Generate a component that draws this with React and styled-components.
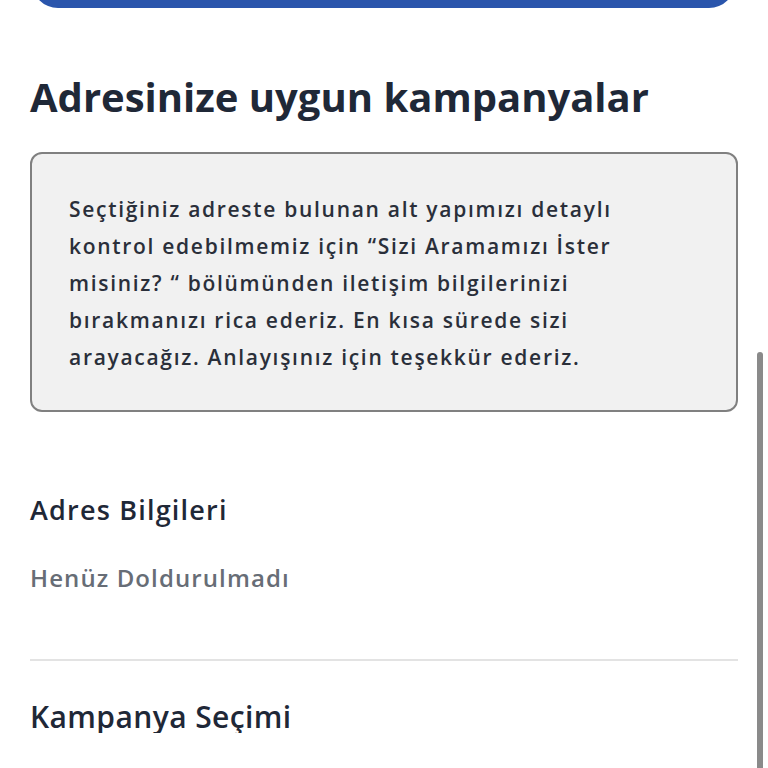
import React from 'react';
import styled, { createGlobalStyle } from 'styled-components';

const GlobalStyle = createGlobalStyle`
  html, body {
    margin: 0;
    padding: 0;
    background: #ffffff;
    overflow: hidden;
  }
  body {
    font-family: "Open Sans", "Noto Sans", sans-serif;
    color: #222a37;
  }
`;

const App = () => {
  return (
    <Page>
      <GlobalStyle />
      <PrimaryButton type="button" aria-label="Devam Et" />
      <Title>Adresinize uygun kampanyalar</Title>
      <InfoBox>
        <InfoText>
          Seçtiğiniz adreste bulunan alt yapımızı detaylı<br />
          kontrol edebilmemiz için “Sizi Aramamızı İster<br />
          misiniz? “ bölümünden iletişim bilgilerinizi<br />
          bırakmanızı rica ederiz. En kısa sürede sizi<br />
          arayacağız. Anlayışınız için teşekkür ederiz.
        </InfoText>
      </InfoBox>
      <Section $top={82}>
        <SectionTitle>Adres Bilgileri</SectionTitle>
        <Placeholder>Henüz Doldurulmadı</Placeholder>
      </Section>
      <Divider />
      <Section $top={40}>
        <SectionTitle $size={30} $spacing={0.4}>Kampanya Seçimi</SectionTitle>
      </Section>
      <ScrollThumb />
    </Page>
  );
};

export default App;


const Page = styled.div`
  width: 768px;
  box-sizing: border-box;
  padding: 0 30px;
  display: flex;
  flex-direction: column;
  & > * {
    flex-shrink: 0;
  }
`;

const PrimaryButton = styled.button`
  height: 60px;
  margin: -52px 3px 0 2px;
  border: none;
  border-radius: 26px;
  background: #2a55ac;
`;

const Title = styled.h1`
  margin: 64px 0 0;
  font-size: 40px;
  line-height: 50px;
  font-weight: 700;
  color: #1f2837;
  letter-spacing: 0;
`;

const InfoBox = styled.div`
  margin-top: 30px;
  height: 260px;
  box-sizing: border-box;
  border: 2px solid #808080;
  border-radius: 12px;
  background: #f1f1f1;
  padding: 37px 37px 0;
`;

const InfoText = styled.p`
  margin: 0;
  font-size: 21px;
  line-height: 37px;
  font-weight: 600;
  letter-spacing: 1.7px;
  color: #2a2f3a;
  white-space: nowrap;
`;

const Section = styled.div`
  display: flex;
  flex-direction: column;
  padding-top: ${p => p.$top}px;
`;

const SectionTitle = styled.h2`
  margin: 0;
  font-size: ${p => p.$size ?? 27}px;
  line-height: 32px;
  font-weight: 600;
  color: #1f2837;
  letter-spacing: ${p => p.$spacing ?? 1.2}px;
`;

const Placeholder = styled.div`
  margin-top: 37px;
  font-size: 24px;
  line-height: 30px;
  font-weight: 600;
  color: #676d76;
  letter-spacing: 1.1px;
`;

const Divider = styled.hr`
  margin: 66px 0 0;
  border: none;
  height: 2px;
  background: #e3e3e3;
`;

const ScrollThumb = styled.div`
  position: fixed;
  right: 5px;
  top: 352px;
  bottom: -4px;
  width: 6px;
  border-radius: 3px;
  background: #8a8a8a;
`;
